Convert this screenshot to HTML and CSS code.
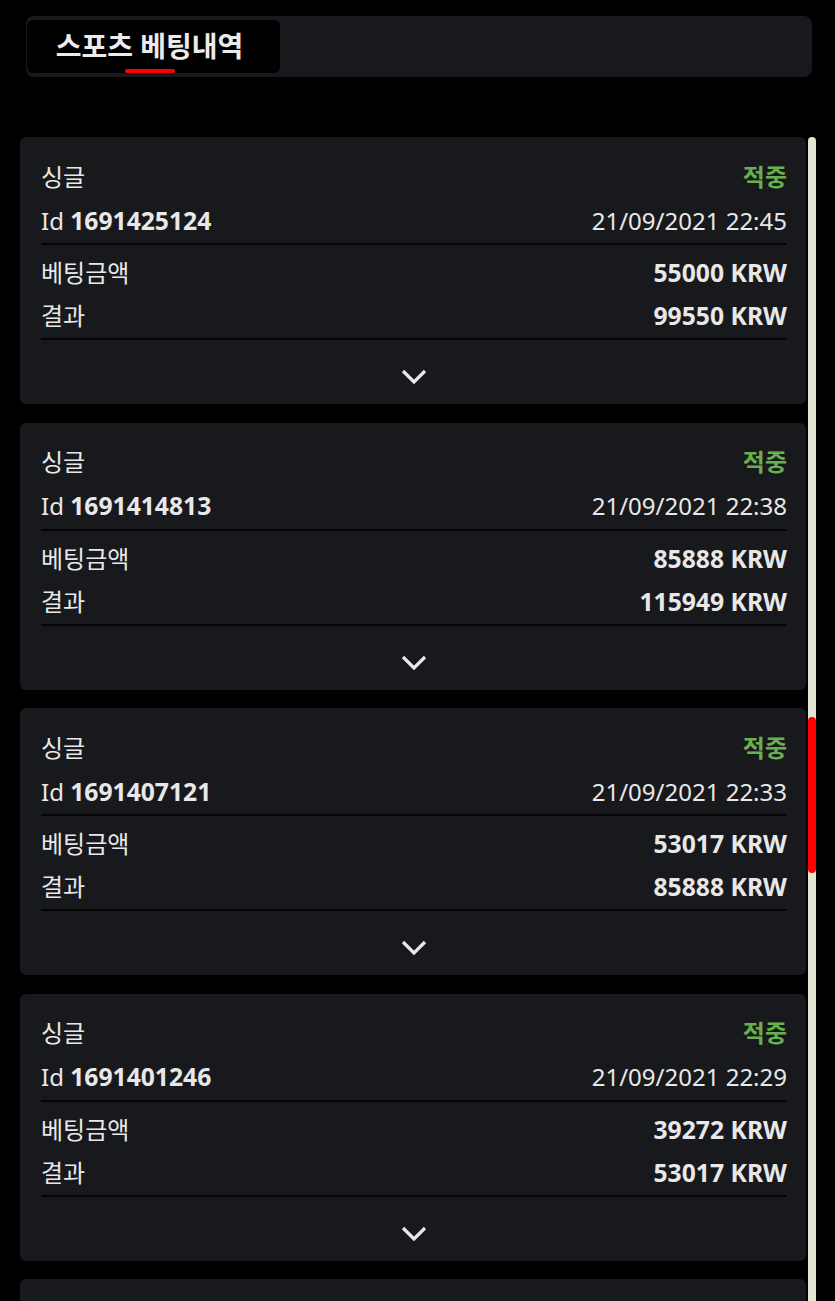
FILE: index.html
```html
<!DOCTYPE html>
<html lang="ko">
<head>
<meta charset="utf-8">
<title>스포츠 베팅내역</title>
<link rel="stylesheet" href="styles.css">
</head>
<body>
<header class="tabs">
  <div class="tab active">스포츠 베팅내역</div>
</header>
<main class="content">
  <div class="list">
    <article class="card">
      <section class="sec">
        <div class="row"><span class="ko">싱글</span><span class="ko win">적중</span></div>
        <div class="row"><span>Id <b>1691425124</b></span><span>21/09/2021 22:45</span></div>
      </section>
      <section class="sec">
        <div class="row"><span class="ko">베팅금액</span><b>55000 KRW</b></div>
        <div class="row"><span class="ko">결과</span><b>99550 KRW</b></div>
      </section>
      <div class="foot"><svg class="chev" viewBox="0 0 26 16" width="26" height="16"><path d="M2 2 L13 13 L24 2" fill="none" stroke="#e8e8e8" stroke-width="3.2"/></svg></div>
    </article>
    <article class="card">
      <section class="sec">
        <div class="row"><span class="ko">싱글</span><span class="ko win">적중</span></div>
        <div class="row"><span>Id <b>1691414813</b></span><span>21/09/2021 22:38</span></div>
      </section>
      <section class="sec">
        <div class="row"><span class="ko">베팅금액</span><b>85888 KRW</b></div>
        <div class="row"><span class="ko">결과</span><b>115949 KRW</b></div>
      </section>
      <div class="foot"><svg class="chev" viewBox="0 0 26 16" width="26" height="16"><path d="M2 2 L13 13 L24 2" fill="none" stroke="#e8e8e8" stroke-width="3.2"/></svg></div>
    </article>
    <article class="card">
      <section class="sec">
        <div class="row"><span class="ko">싱글</span><span class="ko win">적중</span></div>
        <div class="row"><span>Id <b>1691407121</b></span><span>21/09/2021 22:33</span></div>
      </section>
      <section class="sec">
        <div class="row"><span class="ko">베팅금액</span><b>53017 KRW</b></div>
        <div class="row"><span class="ko">결과</span><b>85888 KRW</b></div>
      </section>
      <div class="foot"><svg class="chev" viewBox="0 0 26 16" width="26" height="16"><path d="M2 2 L13 13 L24 2" fill="none" stroke="#e8e8e8" stroke-width="3.2"/></svg></div>
    </article>
    <article class="card">
      <section class="sec">
        <div class="row"><span class="ko">싱글</span><span class="ko win">적중</span></div>
        <div class="row"><span>Id <b>1691401246</b></span><span>21/09/2021 22:29</span></div>
      </section>
      <section class="sec">
        <div class="row"><span class="ko">베팅금액</span><b>39272 KRW</b></div>
        <div class="row"><span class="ko">결과</span><b>53017 KRW</b></div>
      </section>
      <div class="foot"><svg class="chev" viewBox="0 0 26 16" width="26" height="16"><path d="M2 2 L13 13 L24 2" fill="none" stroke="#e8e8e8" stroke-width="3.2"/></svg></div>
    </article>
    <article class="card card-peek"></article>
  </div>
  <div class="track"><div class="thumb"></div></div>
</main>
</body>
</html>
```

FILE: styles.css
```css
html, body {
  margin: 0;
  padding: 0;
  background: #000;
  height: 1301px;
  overflow: hidden;
}
body {
  font-family: "Noto Sans", "Noto Sans CJK KR", sans-serif;
  color: #e8e8e8;
}
.tabs {
  margin: 16px 23px 0 26px;
  height: 61px;
  box-sizing: border-box;
  padding: 4px 1px;
  background: #18191d;
  border-radius: 8px;
  display: flex;
}
.tab {
  width: 253px;
  background: #000;
  border-radius: 6px;
  font-size: 28px;
  font-weight: 700;
  line-height: 53px;
  text-align: center;
  padding-right: 8px;
  box-sizing: border-box;
  position: relative;
  color: #ececec;
}
.tab.active::after {
  content: "";
  position: absolute;
  left: 98px;
  bottom: 0;
  width: 50px;
  height: 4px;
  border-radius: 2px;
  background: #f00;
}
.content {
  margin-top: 60px;
  margin-left: 20px;
  display: flex;
  align-items: flex-start;
  gap: 2px;
}
.list {
  width: 786px;
  display: flex;
  flex-direction: column;
  gap: 18.5px;
}
.card {
  background: #18191d;
  border-radius: 6px;
  padding: 18px 19px 0 21px;
  height: 267px;
  box-sizing: border-box;
}
.sec {
  border-bottom: 2px solid #050505;
}
.sec + .sec {
  padding-top: 7px;
}
.row {
  display: flex;
  justify-content: space-between;
  align-items: center;
  height: 44px;
  padding-bottom: 2px;
  box-sizing: border-box;
  font-size: 24px;
}
.sec + .sec .row {
  height: 43px;
}
.ko {
  font-size: 24px;
  position: relative;
  top: -1px;
}
.row b {
  font-weight: 700;
  font-size: 24.7px;
}
.win {
  color: #68b04d;
  font-weight: 700;
}
.foot {
  height: 63px;
  display: flex;
  justify-content: center;
  align-items: center;
  padding-top: 11px;
  box-sizing: border-box;
}
.chev {
  display: block;
}
.track {
  width: 8px;
  height: 1164px;
  background: #e4e4d4;
  border-radius: 4px 4px 0 0;
  padding-top: 580px;
  box-sizing: border-box;
}
.thumb {
  height: 156px;
  background: #f00;
  border-radius: 4px;
}
```
